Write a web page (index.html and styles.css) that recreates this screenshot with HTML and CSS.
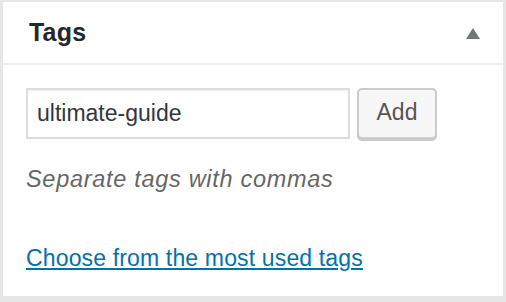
FILE: index.html
```html
<!DOCTYPE html>
<html lang="en">
<head>
<meta charset="utf-8">
<title>Tags</title>
<link rel="stylesheet" href="styles.css">
</head>
<body>
<div class="postbox">
  <div class="postbox-header">
    <h2 class="postbox-title">Tags</h2>
    <span class="toggle-arrow" aria-hidden="true"></span>
  </div>
  <div class="inside">
    <div class="tag-row">
      <input class="tag-input" type="text" value="ultimate-guide">
      <button class="tag-add" type="button">Add</button>
    </div>
    <p class="howto">Separate tags with commas</p>
    <p class="tagcloud-link"><a href="#">Choose from the most used tags</a></p>
  </div>
</div>
</body>
</html>
```
FILE: styles.css
```css
html, body {
  margin: 0;
  padding: 0;
}
body {
  background: #e6e6e6;
  width: 506px;
  height: 302px;
  overflow: hidden;
  font-family: "Liberation Sans", Arial, sans-serif;
}
.postbox {
  margin: 2px 3px 0 3px;
  width: 500px;
  height: 294px;
  background: #fff;
  box-sizing: border-box;
}
.postbox-header {
  height: 63px;
  box-sizing: border-box;
  border-bottom: 2px solid #eeeeee;
  display: flex;
  align-items: center;
  justify-content: space-between;
  padding: 0 23px 0 26px;
}
.postbox-title {
  margin: 0;
  font-size: 25px;
  font-weight: bold;
  color: #23282d;
  line-height: 1;
  letter-spacing: 0.2px;
}
.toggle-arrow {
  width: 0;
  height: 0;
  border-left: 7px solid transparent;
  border-right: 7px solid transparent;
  border-bottom: 11px solid #72777c;
  margin-top: 1px;
}
.inside {
  padding: 23px 23px 0 23px;
}
.tag-row {
  display: flex;
  align-items: flex-start;
  gap: 7px;
  height: 53px;
}
.tag-input {
  width: 324px;
  height: 51px;
  box-sizing: border-box;
  margin: 0;
  border: 2px solid #dddddd;
  box-shadow: inset 0 1px 2px rgba(0, 0, 0, 0.07);
  padding: 0 9px;
  font-family: "Liberation Sans", Arial, sans-serif;
  font-size: 23px;
  color: #32373c;
  background: #fff;
  outline: none;
}
.tag-add {
  width: 80px;
  height: 51px;
  box-sizing: border-box;
  margin: 0;
  border: 2px solid #cccccc;
  border-radius: 5px;
  background: #f7f7f7;
  box-shadow: 0 2px 0 #cccccc;
  font-family: "Liberation Sans", Arial, sans-serif;
  font-size: 23px;
  color: #555555;
  padding: 0 0 3px 0;
}
.howto {
  margin: 21px 0 0 0;
  font-size: 23.5px;
  line-height: 34px;
  font-style: italic;
  letter-spacing: 0.7px;
  color: #666666;
}
.tagcloud-link {
  margin: 45px 0 0 0;
  font-size: 23px;
  line-height: 34px;
  letter-spacing: 0.15px;
}
.tagcloud-link a {
  color: #0073aa;
  text-decoration: underline;
}
```
